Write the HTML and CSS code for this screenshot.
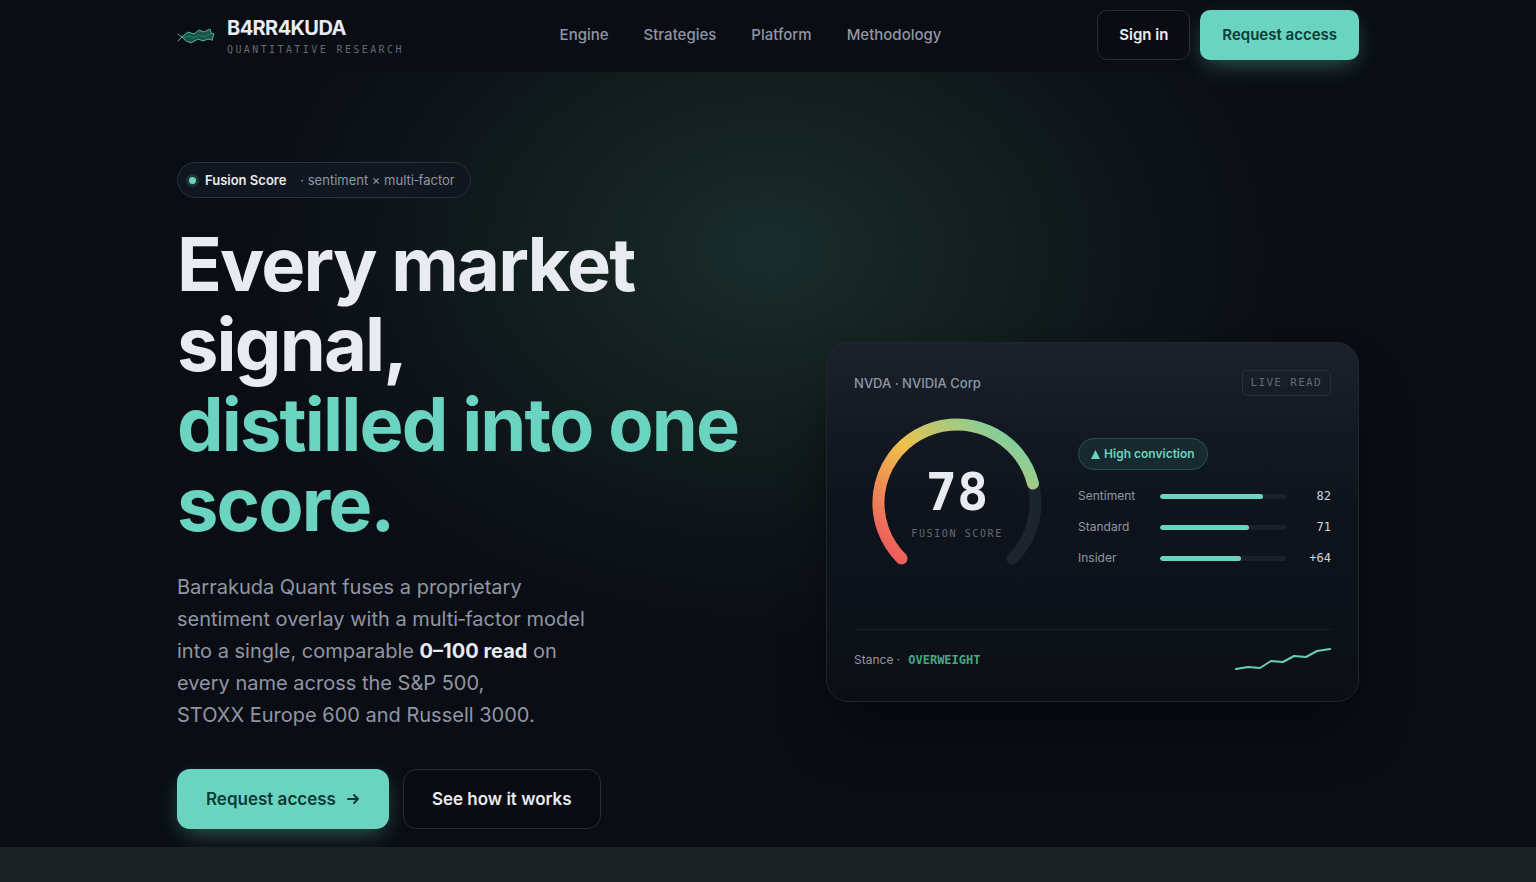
FILE: index.html
```html
<!DOCTYPE html>
<html lang="en">
<head>
<meta charset="utf-8">
<meta name="viewport" content="width=device-width, initial-scale=1">
<title>B4RR4KUDA Quantitative Research</title>
<link rel="stylesheet" href="styles.css">
</head>
<body>
<header class="topbar">
  <div class="wrap topbar-inner">
    <a class="brand" href="#">
      <svg class="brand-mark" viewBox="0 0 38 18" aria-hidden="true">
        <path class="fish-fill" d="M4 10 11 5 17 7 22 3 27 5 33 2 34 6 37 7 35 13 31 12 26 14 21 12 14 16Z"/>
        <path class="fish-mid" d="M7 11 12 9 17 11 22 8 27 10 33 7"/>
        <path d="M1 7 5 10 9 14 14 16 21 12 26 14 31 12 35 13"/>
        <path d="M1 14 5 10 11 5 17 7 22 3 27 5 33 2 34 6 37 7 35 13"/>
      </svg>
      <span class="brand-text">
        <span class="brand-name">B4RR4KUDA</span>
        <span class="brand-sub">QUANTITATIVE RESEARCH</span>
      </span>
    </a>
    <nav class="nav" aria-label="Main">
      <a href="#engine">Engine</a>
      <a href="#strategies">Strategies</a>
      <a href="#platform">Platform</a>
      <a href="#methodology">Methodology</a>
    </nav>
    <div class="actions">
      <button class="btn btn-ghost" type="button">Sign in</button>
      <button class="btn btn-primary" type="button">Request access</button>
    </div>
  </div>
</header>

<main class="hero">
  <div class="wrap hero-grid">
    <section class="intro">
      <p class="pill"><span class="dot"></span><strong>Fusion Score</strong><span>· sentiment × multi‑factor</span></p>
      <h1 class="headline">Every market signal,<span class="accent">distilled into one score.</span></h1>
      <p class="lead">Barrakuda Quant fuses a proprietary sentiment overlay with a multi‑factor model into a single, comparable <strong>0–100 read</strong> on every name across the S&amp;P&nbsp;500, STOXX&nbsp;Europe&nbsp;600 and Russell&nbsp;3000.</p>
      <div class="cta">
        <button class="btn btn-primary btn-large" type="button">Request access
          <svg class="arrow" viewBox="0 0 14 14" aria-hidden="true"><path d="M2 7H12M8 3 12 7 8 11"/></svg>
        </button>
        <button class="btn btn-ghost btn-large" type="button">See how it works</button>
      </div>
    </section>

    <aside class="preview">
      <article class="card">
        <div class="card-head">
          <span class="ticker">NVDA · NVIDIA Corp</span>
          <span class="tag">LIVE READ</span>
        </div>
        <div class="card-body">
          <div class="gauge">
            <svg class="gauge-arc" viewBox="0 0 206 206" aria-hidden="true">
              <defs>
                <linearGradient id="score" x1="0" y1="1" x2="1" y2="0">
                  <stop offset="0" stop-color="#ee4f5f"/>
                  <stop offset="0.5" stop-color="#eec04a"/>
                  <stop offset="1" stop-color="#5fd3b8"/>
                </linearGradient>
              </defs>
              <path class="arc-track" d="M47.5 158.5A78.5 78.5 0 1 1 158.5 158.5"/>
              <path class="arc-value" stroke="url(#score)" d="M47.5 158.5A78.5 78.5 0 1 1 179 83.5"/>
            </svg>
            <div class="gauge-text">
              <span class="gauge-number">78</span>
              <span class="gauge-label">FUSION SCORE</span>
            </div>
          </div>
          <div class="factors">
            <span class="chip"><svg class="chip-icon" viewBox="0 0 9 9" aria-hidden="true"><path d="M4.5 0 9 9H0Z"/></svg>High conviction</span>
            <div class="factor"><span>Sentiment</span><span class="bar"><span class="bar-fill" style="width:82%"></span></span><span class="num">82</span></div>
            <div class="factor"><span>Standard</span><span class="bar"><span class="bar-fill" style="width:71%"></span></span><span class="num">71</span></div>
            <div class="factor"><span>Insider</span><span class="bar"><span class="bar-fill" style="width:64%"></span></span><span class="num">+64</span></div>
          </div>
        </div>
        <div class="card-foot">
          <span class="stance"><span>Stance ·</span><strong>OVERWEIGHT</strong></span>
          <svg class="spark" viewBox="0 0 96 24" aria-hidden="true"><path d="M1 21 13 19 25 20 36 13 48 14 59 8 71 9 82 3 95 1"/></svg>
        </div>
      </article>
    </aside>
  </div>
</main>
<div class="strip"></div>
</body>
</html>
```
FILE: styles.css
```css
:root {
  --bg: #0a0d14;
  --text: #e8ebf2;
  --muted: #9096a3;
  --dim: #626977;
  --teal: #6ad4c0;
  --mono: "DejaVu Sans Mono", monospace;
}
* { box-sizing: border-box; }
body {
  margin: 0;
  min-height: 100vh;
  display: flex;
  flex-direction: column;
  background: var(--bg);
  color: var(--text);
  font-family: Inter, sans-serif;
  font-size: 15px;
}
a { color: inherit; text-decoration: none; }
p, h1 { margin: 0; }
.wrap {
  width: 100%;
  max-width: 1230px;
  margin: 0 auto;
  padding: 0 24px;
}

.topbar { position: relative; background: #0a0d14; padding: 10px 0 12px; }
.topbar-inner { display: flex; align-items: center; justify-content: space-between; }
.brand { display: flex; align-items: center; gap: 12px; padding-top: 2px; }
.brand-mark { width: 38px; height: 18px; fill: none; stroke: #4fb59f; stroke-width: 1; stroke-linejoin: round; stroke-linecap: round; }
.brand-mark .fish-fill { fill: #1c5349; stroke: none; }
.brand-mark .fish-mid { stroke: #2c7a6a; }
.brand-text { display: flex; flex-direction: column; gap: 4px; }
.brand-name { font-size: 20px; line-height: 24px; font-weight: 700; letter-spacing: -0.03em; }
.brand-sub { font-family: var(--mono); font-size: 10px; line-height: 12px; letter-spacing: 0.24em; color: var(--dim); }
.nav { display: flex; gap: 35px; font-weight: 500; line-height: 24px; color: var(--muted); }
.actions { display: flex; gap: 10px; }

.btn {
  display: inline-flex;
  align-items: center;
  justify-content: center;
  gap: 10px;
  padding: 14px 21px;
  border: 1px solid transparent;
  border-radius: 10px;
  font: 600 15px/20px Inter, sans-serif;
  color: var(--text);
  background: transparent;
}
.btn-ghost { border-color: #282d32; background: #0a0c12; }
.btn-primary { background: var(--teal); color: #0c3b35; box-shadow: 0 8px 24px -6px rgba(106, 212, 192, 0.45); }
.btn-large { padding: 18px 28px; border-radius: 13px; font-size: 17px; line-height: 22px; }
.arrow { width: 14px; height: 14px; fill: none; stroke: currentColor; stroke-width: 2; stroke-linecap: round; stroke-linejoin: round; }

.hero {
  padding: 90px 0 18px;
  background: radial-gradient(ellipse 540px 400px at 50% 23%, #192d2d 0%, #14211f 34%, #0e161a 66%, rgba(10, 13, 20, 0) 100%);
}
.hero-grid { display: grid; grid-template-columns: 1.05fr 0.95fr; gap: 60px; align-items: center; }
.pill {
  display: inline-flex;
  align-items: center;
  padding: 8px 15px 8px 11px;
  border: 1px solid #2a333b;
  border-radius: 18px;
  background: #101720;
  font-size: 13px;
  line-height: 18px;
  color: var(--muted);
}
.pill strong { font-weight: 600; color: var(--text); margin: 0 14px 0 9px; }
.dot { width: 7px; height: 7px; border-radius: 50%; background: var(--teal); box-shadow: 0 0 0 3px rgba(106, 212, 192, 0.15); }
.headline { margin-top: 26px; font-size: 74px; line-height: 80px; font-weight: 700; letter-spacing: -0.025em; }
.accent { display: block; color: var(--teal); }
.lead { margin-top: 27px; max-width: 424px; font-size: 20px; line-height: 32px; color: var(--muted); }
.lead strong { font-weight: 700; color: var(--text); }
.cta { display: flex; gap: 14px; margin-top: 38px; }

.preview { padding-top: 52px; }
.card {
  padding: 27px;
  border: 1px solid #20262d;
  border-radius: 22px;
  background: linear-gradient(180deg, #1c222b 0%, #131923 25%, #0f141c 45%, #0e131b 75%, #0b0f14 100%);
  box-shadow: 0 36px 60px -20px rgba(4, 5, 7, 0.8);
}
.card-head { display: flex; align-items: center; justify-content: space-between; }
.ticker { font-size: 13px; line-height: 20px; font-weight: 500; color: var(--muted); }
.tag {
  padding: 4px 8px;
  border: 1px solid #2a3039;
  border-radius: 5px;
  font: 11px/16px var(--mono);
  letter-spacing: 0.12em;
  color: var(--dim);
}
.card-body { display: grid; grid-template-columns: 206px 1fr; gap: 18px; align-items: center; margin-top: 4px; }
.gauge { display: grid; }
.gauge-arc, .gauge-text { grid-area: 1 / 1; }
.gauge-arc { width: 100%; fill: none; stroke-width: 12; stroke-linecap: round; }
.arc-track { stroke: #1c242e; }
.gauge-text { display: flex; flex-direction: column; align-items: center; justify-content: center; gap: 7px; }
.gauge-number { font: 700 52px/56px var(--mono); }
.gauge-label { font: 10px/14px var(--mono); letter-spacing: 0.16em; color: var(--dim); }
.factors { display: flex; flex-direction: column; gap: 13px; font-size: 12px; line-height: 18px; color: var(--muted); }
.chip {
  align-self: flex-start;
  display: inline-flex;
  align-items: center;
  gap: 4px;
  padding: 6px 12px;
  margin-bottom: 4px;
  border: 1px solid #25504c;
  border-radius: 16px;
  background: #172a30;
  font-size: 12px;
  font-weight: 600;
  color: var(--teal);
}
.chip-icon { width: 9px; height: 9px; fill: currentColor; }
.factor { display: grid; grid-template-columns: 70px 1fr 33px; gap: 12px; align-items: center; }
.bar { height: 5px; border-radius: 3px; background: #1a212b; overflow: hidden; }
.bar-fill { display: block; height: 100%; border-radius: 3px; background: var(--teal); }
.num { font: 12px/18px var(--mono); color: #d3d6dc; text-align: right; }
.card-foot {
  display: flex;
  align-items: center;
  justify-content: space-between;
  margin-top: 23px;
  padding: 18px 0 2px;
  border-top: 1px solid #191f24;
}
.stance { display: flex; gap: 8px; font-size: 12px; line-height: 18px; color: var(--muted); }
.stance strong { font: 700 12px/18px var(--mono); color: #46a881; }
.spark { width: 96px; height: 24px; fill: none; stroke: #68cdb8; stroke-width: 2; stroke-linejoin: round; stroke-linecap: round; }

.strip { flex: 1; min-height: 35px; background: #1c2122; }
```
